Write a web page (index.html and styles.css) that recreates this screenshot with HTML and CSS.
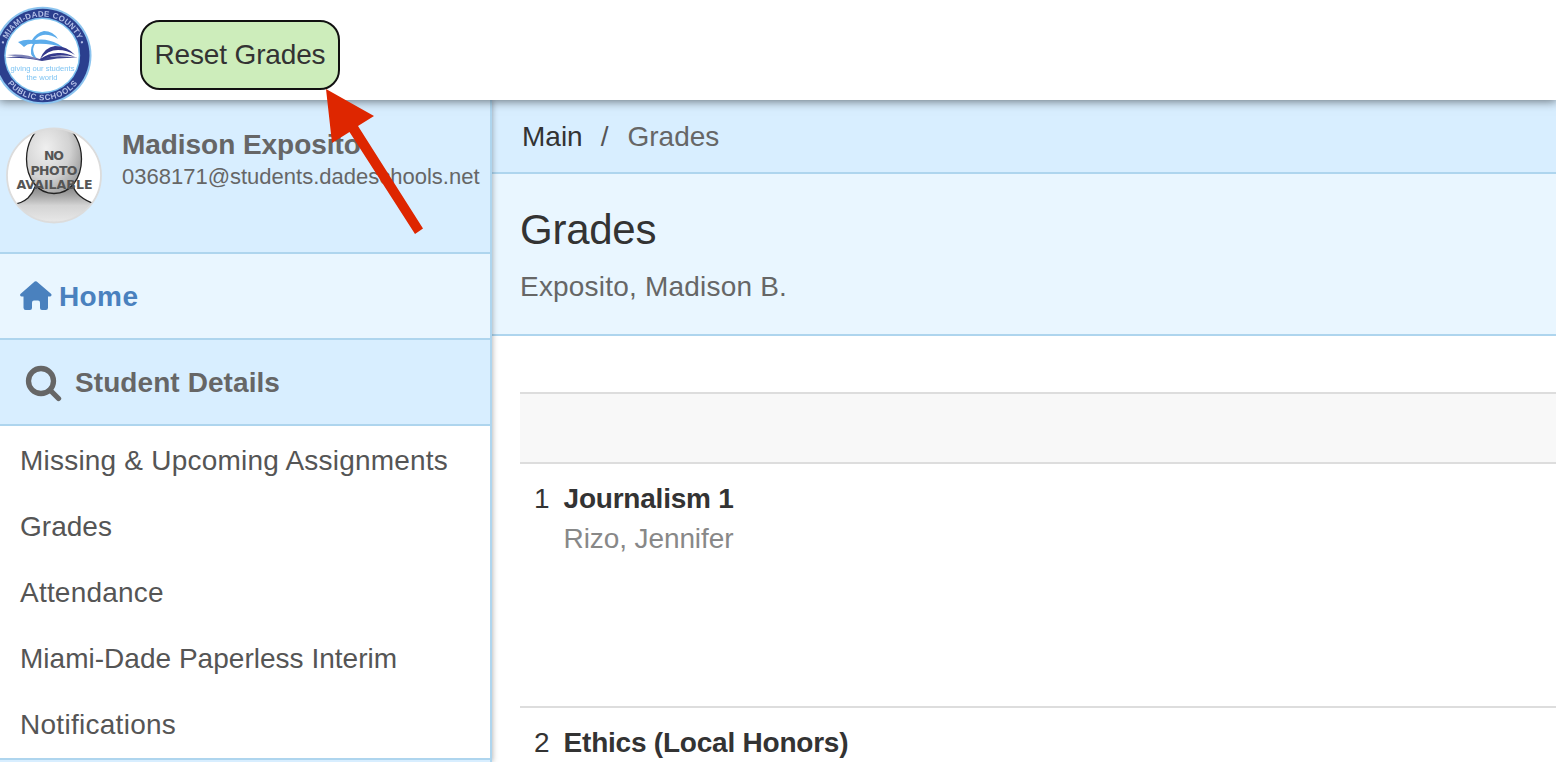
FILE: index.html
```html
<!DOCTYPE html>
<html lang="en">
<head>
<meta charset="utf-8">
<title>Grades</title>
<link rel="stylesheet" href="styles.css">
</head>
<body>
<div class="app">
  <header class="topbar">
    <svg class="logo" width="94" height="110" viewBox="0 0 94 110">
      <defs>
        <path id="ringTop" d="M3.500 55.500a39 39 0 0 1 78 0"/>
        <path id="ringBottom" d="M-2.300 55.500a44.800 44.800 0 0 0 89.600 0"/>
      </defs>
      <circle cx="42.700" cy="55.500" r="48.800" fill="#8cc4ef"/>
      <circle cx="42.700" cy="55.500" r="46.800" fill="#2b3f8e"/>
      <circle cx="42.200" cy="55.500" r="38" fill="#7cc0ee"/>
      <circle cx="42.200" cy="55.500" r="36.500" fill="#fff"/>
      <text class="logo-ring"><textPath href="#ringTop" startOffset="50%" text-anchor="middle" textLength="100">• MIAMI-DADE COUNTY •</textPath></text>
      <text class="logo-ring"><textPath href="#ringBottom" startOffset="50%" text-anchor="middle" textLength="80">PUBLIC SCHOOLS</textPath></text>
      <g class="logo-art">
      <path d="M18 42q7-3 14-2q4-7 12-9q9 0 14 8q-8-5-15-4q-5 1-8 5q12-2 23 4q3 2 6 4q-14-5-29-4q-3 4-1 10q1 3 4 5q-8-1-7-9q0-3 2-6q-5-1-9 3q-2-2-6-5Z" fill="#5caceb"/>
      <path d="M5 58q18-4 35 1q15-5 39-1q-18-1-37 3q-20-4-37-3Z" fill="#3c4390"/>
      <path d="M7 55q19-2 33 5q-17-3-33-5Z" fill="#7b80b5"/>
      <path d="M40 59q5-12 15-13q12 0 20 9q-8-5-17-5q-10 0-18 9q10-7 20-6q7 0 15 4q-19-4-33 3Z" fill="#34398c"/>
      </g>
      <text class="logo-motto" x="42.500" y="71" text-anchor="middle" textLength="64" lengthAdjust="spacingAndGlyphs">giving our students</text>
      <text class="logo-motto" x="42" y="79.500" text-anchor="middle" textLength="31" lengthAdjust="spacingAndGlyphs">the world</text>
    </svg>
    <button class="reset-btn">Reset Grades</button>
  </header>
  <div class="body">
    <aside class="sidebar">
      <section class="profile">
        <svg class="avatar" width="96" height="98" viewBox="0 0 96 98">
          <defs>
            <clipPath id="avatarClip"><circle cx="48" cy="49.500" r="47"/></clipPath>
            <linearGradient id="neck" x1="0" y1="0" x2="0" y2="1"><stop offset="0" stop-color="#777"/><stop offset=".3" stop-color="#a5a5a5"/><stop offset=".55" stop-color="#d4d4d4"/><stop offset="1" stop-color="#eaeaea"/></linearGradient>
            <radialGradient id="head" cx=".35" cy=".35" r=".8"><stop offset="0" stop-color="#efefef"/><stop offset=".55" stop-color="#d2d2d2"/><stop offset="1" stop-color="#909090"/></radialGradient>
          </defs>
          <circle cx="48" cy="49.500" r="47" fill="#fff"/>
          <g clip-path="url(#avatarClip)">
            <path d="M7 78q8 0 15-6q5-5 7-15h38q2 8 7 13q6 5 15 8v20H7Z" fill="url(#neck)"/>
            <path d="M7 78q8 0 15-6q5-5 7-11M67 60q2 6 7 10q6 5 15 8" fill="none" stroke="#222" stroke-width="1.300"/>
            <path d="M39-2C28 3 20.500 18 20.500 33C20.500 53 32 67.500 48 67.500C64 67.500 75.500 53 75.500 33C75.500 18 68 3 57-2Z" fill="url(#head)" stroke="#222" stroke-width="1.300"/>
          </g>
          <circle cx="48" cy="49.500" r="47" fill="none" stroke="#dcdcdc" stroke-width="1.800"/>
          <g class="avatar-text" text-anchor="middle">
            <text x="48" y="34" textLength="20">NO</text>
            <text x="48" y="48.500" textLength="47">PHOTO</text>
            <text x="48.500" y="63" textLength="76" lengthAdjust="spacingAndGlyphs">AVAILABLE</text>
          </g>
        </svg>
        <div class="profile-info">
          <strong class="profile-name">Madison Exposito</strong>
          <span class="profile-mail">0368171@students.dadeschools.net</span>
        </div>
      </section>
      <a class="nav-home">
        <svg width="32" height="30" viewBox="0 0 32 30"><path d="M14.700.6q1-.9 2 0L31 12.800q.8.8.4 1.700q-.4.900-1.500.9H28v11.400q0 2.200-2.200 2.200H22q-2 0-2-2v-5.200q0-2.200-2-2.200h-4q-2 0-2 2.200V27q0 2-2 2H5.700q-2.200 0-2.200-2.200V15.400H1.700q-1.200 0-1.500-.9q-.4-.9.500-1.700Z" fill="#4a81be"/></svg>
        <span class="home-text">Home</span>
      </a>
      <div class="nav-section">
        <svg class="search" width="38" height="38" viewBox="0 0 38 38"><circle cx="17" cy="16" r="12.500" fill="none" stroke="#666" stroke-width="5.300"/><path d="M26 25l8.500 8.500" stroke="#666" stroke-width="5.300" stroke-linecap="round"/></svg>
        <span class="details-text">Student Details</span>
      </div>
      <ul class="nav-list">
        <li>Missing &amp; Upcoming Assignments</li>
        <li class="snug">Grades</li>
        <li>Attendance</li>
        <li class="snug">Miami-Dade Paperless Interim</li>
        <li class="wide">Notifications</li>
      </ul>
    </aside>
    <main class="content">
      <nav class="breadcrumb"><a class="crumb">Main</a><span class="slash">/</span><span>Grades</span></nav>
      <section class="page-head">
        <h1>Grades</h1>
        <p class="student">Exposito, Madison B.</p>
      </section>
      <section class="grades">
        <div class="grades-head"></div>
        <div class="course">
          <span class="period">1</span>
          <div class="course-info"><strong>Journalism 1</strong><span class="teacher">Rizo, Jennifer</span></div>
        </div>
        <div class="course">
          <span class="period">2</span>
          <div class="course-info"><strong>Ethics (Local Honors)</strong></div>
        </div>
      </section>
    </main>
  </div>
  <svg class="arrow" width="100" height="148" viewBox="0 0 100 148"><path d="M1 1L49 28L33 38L98 140.500L90 146L24.500 44L7 55Z" fill="#de2600"/></svg>
</div>
</body>
</html>
```
FILE: styles.css
```css
* { box-sizing: border-box; }
body { margin: 0; background: #fff; color: #333; font: 28px/40px "Liberation Sans", Arial, sans-serif; overflow: hidden; }
.app { position: relative; display: flex; flex-direction: column; width: 100%; height: 762px; overflow: hidden; }
.topbar { position: relative; z-index: 3; display: flex; align-items: flex-start; height: 100px; flex: none; background: #fff; box-shadow: 0 0 10px 1px rgba(0, 0, 0, .55); }
.logo { flex: none; margin-right: 46px; }
.logo-ring { font: bold 8px "Liberation Sans", sans-serif; fill: #b3bfe6; filter: blur(.4px); }
.logo-art { filter: blur(.4px); }
.logo-motto { font: 7px "Liberation Sans", sans-serif; fill: #7fc4f3; filter: blur(.3px); }
.reset-btn { width: 200px; height: 70px; margin-top: 20px; padding: 0; border: 2px solid #111; border-radius: 20px; background: #cdedbb; color: #333; font: inherit; letter-spacing: -.15px; white-space: nowrap; }
.body { display: flex; flex: 1; min-height: 0; }
.sidebar { position: relative; z-index: 2; flex: none; width: 492px; border-right: 2px solid #aed5ee; background: #d8eeff; box-shadow: 0 0 6px rgba(0, 0, 0, .36); }
.profile { display: flex; height: 154px; padding: 26px 0 0 6px; border-bottom: 2px solid #aed5ee; }
.avatar { flex: none; }
.avatar-text { font: bold 12.500px "DejaVu Sans", sans-serif; fill: #555; }
.profile-info { display: flex; flex-direction: column; padding: 1px 0 0 20px; color: #666; white-space: nowrap; }
.profile-name { line-height: 36px; letter-spacing: -.05px; }
.profile-mail { font-size: 22px; line-height: 28px; }
.nav-home { display: flex; align-items: center; gap: 7px; height: 86px; padding-left: 20px; border-bottom: 2px solid #aed5ee; background: #e9f6ff; color: #4a81be; font-weight: bold; }
.home-text { padding-top: 2px; letter-spacing: .4px; }
.nav-section { display: flex; align-items: center; gap: 13px; height: 86px; padding-left: 24px; border-bottom: 2px solid #aed5ee; color: #666; font-weight: bold; }
.search { margin-top: 4px; }
.details-text { padding-top: 2px; letter-spacing: .08px; }
.nav-list { height: 334px; margin: 0; padding: 2px 0 0 20px; border-bottom: 2px solid #aed5ee; list-style: none; background: #fff; color: #555; letter-spacing: .21px; }
.nav-list li { height: 66px; line-height: 66px; white-space: nowrap; }
.nav-list .snug { letter-spacing: .02px; }
.nav-list .wide { letter-spacing: .28px; }
.content { flex: 1; min-width: 0; }
.breadcrumb { display: flex; height: 74px; padding: 17px 0 0 30px; border-bottom: 2px solid #aed5ee; background: #d8eeff; color: #666; }
.crumb { color: #333; }
.slash { margin: 0 19px 0 18px; color: #555; }
.page-head { height: 162px; padding: 30px 0 0 28px; border-bottom: 2px solid #aed5ee; background: #e9f6ff; }
h1 { margin: 0; font-size: 42px; font-weight: 400; line-height: 52px; letter-spacing: -.25px; }
.student { margin: 11px 0 0; color: #666; letter-spacing: .2px; }
.grades { margin: 56px 0 0 28px; }
.grades-head { height: 72px; border: solid #ddd; border-width: 2px 0; background: #f8f8f8; }
.course { display: flex; gap: 14px; height: 244px; padding: 15px 0 0 14px; border-bottom: 2px solid #ddd; }
.course-info { display: flex; flex-direction: column; letter-spacing: -.22px; }
.teacher { color: #888; letter-spacing: -.1px; }
.arrow { position: absolute; z-index: 5; left: 325px; top: 88px; }
```
